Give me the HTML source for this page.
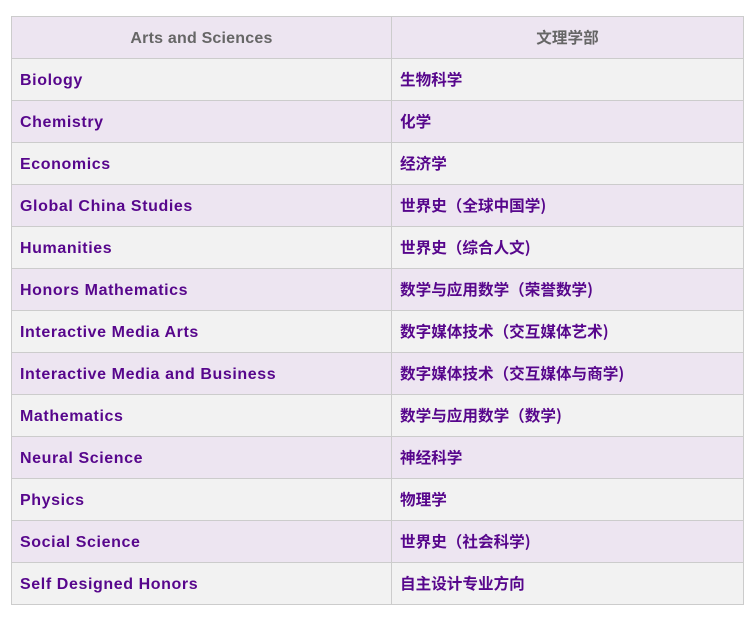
<!DOCTYPE html>
<html><head><meta charset="utf-8"><style>
body{margin:0;background:#fff;}
table{position:absolute;left:11px;top:16px;width:733px;border-collapse:collapse;font-family:"Liberation Sans",sans-serif;}
tr{height:42px;}
td,th{border:1px solid #ccc;height:42px;padding:0 0 0 8px;text-align:left;font-size:16px;letter-spacing:0.6px;line-height:20px;font-weight:bold;color:#57068c;box-sizing:border-box;vertical-align:middle;}
th{text-align:center;color:#666;font-size:16px;letter-spacing:0.2px;padding:0;background:#ede5f1;}
td:first-child{width:380px;}
tr:nth-child(even) td{background:#f2f2f2;}
tr:nth-child(odd) td{background:#ede5f1;}
.c{font-family:"Noto Sans CJK SC",sans-serif;font-size:15.6px;letter-spacing:0;}
.c span{position:relative;top:-1px;}
td:first-child span,th span.l{position:relative;top:1px;}
</style></head><body>
<table>
<tr><th><span class="l">Arts and Sciences</span></th><th class="c"><span>文理学部</span></th></tr>
<tr><td><span>Biology</span></td><td class="c"><span>生物科学</span></td></tr>
<tr><td><span>Chemistry</span></td><td class="c"><span>化学</span></td></tr>
<tr><td><span>Economics</span></td><td class="c"><span>经济学</span></td></tr>
<tr><td><span>Global China Studies</span></td><td class="c"><span>世界史（全球中国学)</span></td></tr>
<tr><td><span>Humanities</span></td><td class="c"><span>世界史（综合人文)</span></td></tr>
<tr><td><span>Honors Mathematics</span></td><td class="c"><span>数学与应用数学（荣誉数学)</span></td></tr>
<tr><td><span>Interactive Media Arts</span></td><td class="c"><span>数字媒体技术（交互媒体艺术)</span></td></tr>
<tr><td><span>Interactive Media and Business</span></td><td class="c"><span>数字媒体技术（交互媒体与商学)</span></td></tr>
<tr><td><span>Mathematics</span></td><td class="c"><span>数学与应用数学（数学)</span></td></tr>
<tr><td><span>Neural Science</span></td><td class="c"><span>神经科学</span></td></tr>
<tr><td><span>Physics</span></td><td class="c"><span>物理学</span></td></tr>
<tr><td><span>Social Science</span></td><td class="c"><span>世界史（社会科学)</span></td></tr>
<tr><td><span>Self Designed Honors</span></td><td class="c"><span>自主设计专业方向</span></td></tr>
</table>
</body></html>
